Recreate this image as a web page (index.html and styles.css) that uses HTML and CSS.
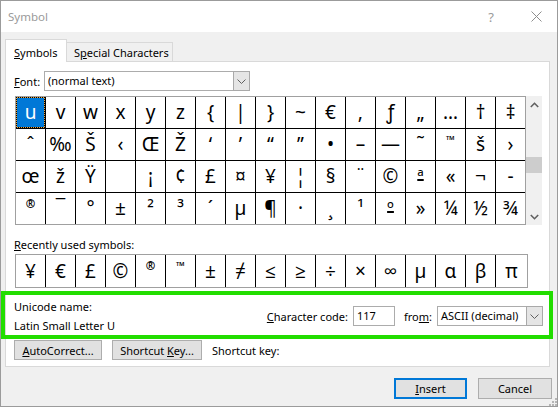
FILE: index.html
```html
<!DOCTYPE html>
<html>
<head>
<meta charset="utf-8">
<title>Symbol</title>
<link rel="stylesheet" href="styles.css">
</head>
<body>
<div class="window">
  <div class="titlebar">
    <span class="title">Symbol</span>
    <span class="tb-help">?</span>
    <svg class="tb-close" width="11" height="11" viewBox="0 0 11 11"><path d="M0.5 0.5L10.5 10.5M10.5 0.5L0.5 10.5" stroke="#8e8e8e" stroke-width="1" fill="none"/></svg>
  </div>
  <div class="body">
    <div class="tabs">
      <div class="tab active"><span><u>S</u>ymbols</span></div>
      <div class="tab"><span>S<u>p</u>ecial Characters</span></div>
    </div>
    <div class="panel">
      <div class="font-row">
        <span class="font-label"><u>F</u>ont:</span>
        <div class="select font-select">
          <span class="sel-text">(normal text)</span>
          <span class="sel-btn"><svg width="9" height="5" viewBox="0 0 9 5"><path d="M0.5 0.5L4.5 4.5L8.5 0.5" stroke="#606060" stroke-width="1" fill="none"/></svg></span>
        </div>
      </div>
      <div class="grid-row">
        <div class="symgrid">
          <div class="cell sel">u</div><div class="cell">v</div><div class="cell">w</div><div class="cell">x</div><div class="cell">y</div><div class="cell">z</div><div class="cell">{</div><div class="cell">|</div><div class="cell">}</div><div class="cell">~</div><div class="cell">€</div><div class="cell">‚</div><div class="cell">ƒ</div><div class="cell">„</div><div class="cell">…</div><div class="cell">†</div><div class="cell">‡</div>
          <div class="cell">ˆ</div><div class="cell">‰</div><div class="cell">Š</div><div class="cell">‹</div><div class="cell">Œ</div><div class="cell">Ž</div><div class="cell">‘</div><div class="cell">’</div><div class="cell">“</div><div class="cell">”</div><div class="cell">•</div><div class="cell">–</div><div class="cell">—</div><div class="cell">˜</div><div class="cell sup">™</div><div class="cell">š</div><div class="cell">›</div>
          <div class="cell">œ</div><div class="cell">ž</div><div class="cell">Ÿ</div><div class="cell">&nbsp;</div><div class="cell">¡</div><div class="cell">¢</div><div class="cell">£</div><div class="cell">¤</div><div class="cell">¥</div><div class="cell">¦</div><div class="cell">§</div><div class="cell">¨</div><div class="cell">©</div><div class="cell ord">ª</div><div class="cell">«</div><div class="cell">¬</div><div class="cell">-</div>
          <div class="cell sup">®</div><div class="cell">¯</div><div class="cell">°</div><div class="cell">±</div><div class="cell">²</div><div class="cell">³</div><div class="cell">´</div><div class="cell">µ</div><div class="cell">¶</div><div class="cell">·</div><div class="cell">¸</div><div class="cell">¹</div><div class="cell ord">º</div><div class="cell">»</div><div class="cell">¼</div><div class="cell">½</div><div class="cell">¾</div>
        </div>
        <div class="scrollbar">
          <div class="sb-arrow"><svg width="9" height="6" viewBox="0 0 9 6"><path d="M0.8 5L4.5 1.3L8.2 5" stroke="#606060" stroke-width="1.6" fill="none"/></svg></div>
          <div class="sb-track"><div class="sb-thumb"></div></div>
          <div class="sb-arrow"><svg width="9" height="6" viewBox="0 0 9 6"><path d="M0.8 1L4.5 4.7L8.2 1" stroke="#606060" stroke-width="1.6" fill="none"/></svg></div>
        </div>
      </div>
      <div class="recent-label"><u>R</u>ecently used symbols:</div>
      <div class="recent">
        <div class="cell">¥</div><div class="cell">€</div><div class="cell">£</div><div class="cell">©</div><div class="cell sup">®</div><div class="cell sup">™</div><div class="cell">±</div><div class="cell">≠</div><div class="cell">≤</div><div class="cell">≥</div><div class="cell">÷</div><div class="cell">×</div><div class="cell">∞</div><div class="cell">µ</div><div class="cell">α</div><div class="cell">β</div><div class="cell">π</div>
      </div>
      <div class="info-row">
        <div class="uname">
          <div class="line">Unicode name:</div>
          <div class="line">Latin Small Letter U</div>
        </div>
        <div class="code">
          <span class="code-label"><u>C</u>haracter code:</span>
          <div class="input">117</div>
          <span class="from-label">fro<u>m</u>:</span>
          <div class="select from-select">
            <span class="sel-text">ASCII (decimal)</span>
            <span class="sel-btn"><svg width="9" height="5" viewBox="0 0 9 5"><path d="M0.5 0.5L4.5 4.5L8.5 0.5" stroke="#606060" stroke-width="1" fill="none"/></svg></span>
          </div>
        </div>
      </div>
      <div class="btn-row">
        <div class="btn btn-auto"><span><u>A</u>utoCorrect...</span></div>
        <div class="btn btn-short"><span>Shortcut <u>K</u>ey...</span></div>
        <span class="short-label">Shortcut key:</span>
      </div>
    </div>
    <div class="footer">
      <div class="btn btn-default"><span><u>I</u>nsert</span></div>
      <div class="btn btn-cancel"><span>Cancel</span></div>
    </div>
  </div>
  <div class="highlight"></div>
  <svg class="grip" width="9" height="9" viewBox="0 0 9 9">
    <rect x="7" y="1" width="2" height="2" fill="#b5b5b5"/>
    <rect x="4" y="4" width="2" height="2" fill="#b5b5b5"/>
    <rect x="7" y="4" width="2" height="2" fill="#b5b5b5"/>
    <rect x="1" y="7" width="2" height="2" fill="#b5b5b5"/>
    <rect x="4" y="7" width="2" height="2" fill="#b5b5b5"/>
    <rect x="7" y="7" width="2" height="2" fill="#b5b5b5"/>
  </svg>
</div>
</body>
</html>
```

FILE: styles.css
```css
* { box-sizing: border-box; }
html, body { margin: 0; padding: 0; background: #fff; }
body {
  font-family: "Noto Sans", "Open Sans", "DejaVu Sans", sans-serif;
  font-size: 11px;
  color: #000;
}
u { text-decoration: underline; text-underline-offset: 1px; }

.window {
  position: relative;
  width: 558px;
  height: 407px;
  border: 1px solid #9b9b9b;
  background: #f0f0f0;
  display: flex;
  flex-direction: column;
}

.titlebar {
  flex: none;
  height: 31px;
  background: #fff;
  display: flex;
  align-items: center;
  padding-left: 7px;
}
.title { color: #9a9a9a; font-size: 11.5px; }
.tb-help { margin-left: auto; color: #9a9a9a; font-size: 13px; }
.tb-close { margin-left: 37px; margin-right: 15px; }

.body {
  flex: 1;
  padding: 7px 7px 0 4px;
}

.tabs {
  display: flex;
  align-items: flex-end;
  height: 22px;
}
.tab {
  height: 19px;
  border: 1px solid #d9d9d9;
  border-bottom: none;
  background: #f0f0f0;
  padding: 0 0 0 7px;
  width: 107px;
  line-height: 19px;
  margin-left: -1px;
  white-space: nowrap;
}
.tab.active {
  height: 23px;
  width: 62px;
  background: #fff;
  margin-left: 0;
  margin-bottom: -1px;
  padding-left: 8px;
  line-height: 25px;
  position: relative;
  z-index: 1;
}

.panel {
  border: 1px solid #d9d9d9;
  background: #fff;
  padding: 9px 6px 6px 8px;
}

.font-row {
  display: flex;
  align-items: center;
  height: 20px;
}
.font-label { width: 30px; white-space: nowrap; }

.select {
  display: flex;
  height: 20px;
  border: 1px solid #acacac;
  background: #fff;
}
.sel-text { flex: 1; padding-left: 3px; line-height: 18px; white-space: nowrap; }
.sel-btn {
  width: 17px;
  background: #e5e5e5;
  border: 1px solid #a9a9a9;
  display: flex;
  align-items: center;
  justify-content: center;
  margin: -1px -1px -1px 0;
}
.font-select { width: 206px; }

.grid-row {
  display: flex;
  margin-top: 5px;
  margin-left: 1px;
}
.symgrid {
  display: grid;
  grid-template-columns: repeat(17, 29px);
  grid-auto-rows: 31px;
  gap: 1px;
  background: #000;
  border: 1px solid #a0a0a0;
  width: 511px;
}
.cell {
  background: #fff;
  text-align: center;
  font-size: 19px;
  line-height: 31px;
  overflow: hidden;
  white-space: nowrap;
}
.cell.sup { font-size: 11.5px; font-weight: 700; line-height: 22px; }
.cell.ord {
  text-decoration: underline;
  text-decoration-thickness: 1.5px;
  text-underline-offset: -4px;
  font-size: 18px;
}
.cell.sel {
  background: #0078d7;
  color: #fff;
  box-shadow: inset 0 0 0 1px #e8a33c;
  outline: 1px dotted #000;
  outline-offset: -1px;
}

.scrollbar {
  width: 16px;
  height: 129px;
  background: #f0f0f0;
  display: flex;
  flex-direction: column;
}
.sb-arrow {
  height: 17px;
  display: flex;
  align-items: center;
  justify-content: center;
}
.sb-track { flex: 1; }
.sb-thumb {
  margin-top: 44px;
  height: 16px;
  background: #cdcdcd;
}

.recent-label {
  margin-top: 12px;
  line-height: 16px;
  height: 16px;
}
.recent {
  margin-top: 1px;
  margin-left: 1px;
  display: grid;
  grid-template-columns: repeat(16, 29px) 31px;
  grid-auto-rows: 32px;
  gap: 1px;
  background: #000;
  border: 1px solid #a0a0a0;
  width: 513px;
}
.recent .cell { line-height: 32px; }
.recent .cell.sup { line-height: 22px; }

.info-row {
  margin-top: 11px;
  display: flex;
  align-items: center;
}
.uname .line { line-height: 15px; height: 15px; }
.uname .line + .line { margin-top: 4px; }
.code {
  margin-left: auto;
  display: flex;
  align-items: center;
}
.input {
  width: 42px;
  height: 20px;
  border: 1px solid #acacac;
  background: #fff;
  padding-left: 3px;
  line-height: 18px;
  margin: 0 9px 0 5px;
}
.from-label { margin-right: 5px; }
.from-select { width: 106px; }

.btn-row {
  margin-top: 7px;
  display: flex;
  align-items: center;
  gap: 10px;
}
.btn {
  height: 20px;
  border: 1px solid #adadad;
  background: #e1e1e1;
  display: flex;
  align-items: center;
  justify-content: center;
  white-space: nowrap;
}
.btn-auto { width: 88px; }
.btn-short { width: 90px; }

.footer {
  display: flex;
  justify-content: flex-end;
  gap: 11px;
  margin-top: 11px;
  margin-right: -2px;
}
.btn-default {
  width: 73px;
  height: 21px;
  border: 2px solid #0078d7;
}
.btn-cancel {
  width: 74px;
  height: 21px;
}

.highlight {
  position: absolute;
  left: 0;
  top: 290px;
  width: 552px;
  height: 48px;
  border: 4px solid #22dd00;
  pointer-events: none;
}
.grip {
  position: absolute;
  right: 0;
  bottom: 0;
}
```
